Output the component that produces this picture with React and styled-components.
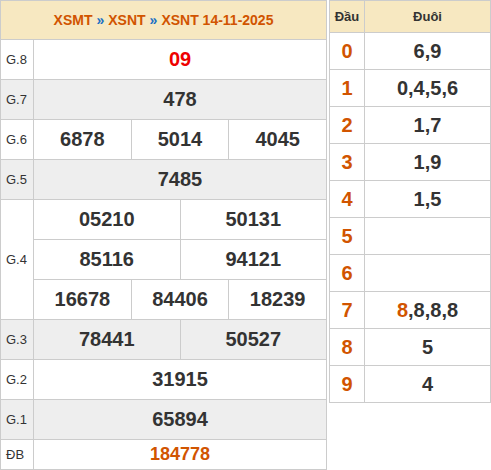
import React from "react"
import styled, { createGlobalStyle } from "styled-components"

const GlobalStyle = createGlobalStyle`
  body {
    margin: 0;
    background: #fff;
    font-family: "Liberation Sans", Arial, sans-serif;
  }
`

const Page = styled.div`
  display: flex;
  align-items: flex-start;
  gap: 2px;
  width: 491px;
`

const Results = styled.div`
  width: 327px;
  border-left: 1px solid #ccc;
  border-right: 1px solid #ccc;
  border-top: 1px solid #ccc;
  box-sizing: border-box;
`

const Title = styled.div`
  height: 38px;
  display: flex;
  align-items: center;
  justify-content: center;
  background: #f7e8c1;
  border-bottom: 1px solid #ccc;
  font-size: 14px;
  font-weight: bold;
  color: #d15400;
`

const Sep = styled.span`
  color: #1a6fc4;
  margin: 0 4px;
`

const Row = styled.div`
  display: grid;
  grid-template-columns: 33px 1fr;
  background: ${({ gray }) => (gray ? "#eeeeee" : "#fff")};
  border-bottom: 1px solid #ccc;
`

const Label = styled.div`
  display: flex;
  align-items: center;
  padding-left: 5px;
  border-right: 1px solid #ccc;
  font-size: 13px;
  color: #333;
`

const Lines = styled.div`
  display: flex;
  flex-direction: column;
`

const Line = styled.div`
  display: flex;
  height: ${({ h }) => h || 39}px;
  & + & {
    border-top: 1px solid #ccc;
  }
`

const Num = styled.div`
  flex: 1;
  display: flex;
  align-items: center;
  justify-content: center;
  font-size: ${({ small }) => (small ? 18 : 20)}px;
  font-weight: bold;
  color: ${({ color }) => color || "#333"};
  & + & {
    border-left: 1px solid #ccc;
  }
`

const Loto = styled.div`
  width: 162px;
  border: 1px solid #ccc;
  border-bottom: none;
  box-sizing: border-box;
`

const LotoRow = styled.div`
  display: grid;
  grid-template-columns: 35px 1fr;
  height: ${({ head }) => (head ? 31 : 36)}px;
  background: ${({ head }) => (head ? "#f7e8c1" : "#fff")};
  border-bottom: 1px solid #ccc;
`

const LotoCell = styled.div`
  display: flex;
  align-items: center;
  justify-content: center;
  font-weight: bold;
  font-size: ${({ head }) => (head ? 13 : 20)}px;
  color: ${({ orange }) => (orange ? "#d15400" : "#333")};
  &:first-child {
    border-right: 1px solid #ccc;
  }
`

const Hi = styled.span`
  color: #d15400;
`

const prizes = [
  { label: "G.8", lines: [["09"]], color: "#ee0000" },
  { label: "G.7", lines: [["478"]], gray: true },
  { label: "G.6", lines: [["6878", "5014", "4045"]] },
  { label: "G.5", lines: [["7485"]], gray: true },
  {
    label: "G.4",
    lines: [
      ["05210", "50131"],
      ["85116", "94121"],
      ["16678", "84406", "18239"],
    ],
  },
  { label: "G.3", lines: [["78441", "50527"]], gray: true },
  { label: "G.2", lines: [["31915"]] },
  { label: "G.1", lines: [["65894"]], gray: true },
  { label: "ĐB", lines: [["184778"]], color: "#d15400", small: true, h: 29 },
]

const loto = ["6,9", "0,4,5,6", "1,7", "1,9", "1,5", "", "", "8,8,8,8", "5", "4"]

export default function App() {
  return (
    <>
      <GlobalStyle />
      <Page>
        <Results>
          <Title>
            XSMT<Sep>»</Sep>XSNT<Sep>»</Sep>XSNT 14-11-2025
          </Title>
          {prizes.map(p => (
            <Row key={p.label} gray={p.gray}>
              <Label>{p.label}</Label>
              <Lines>
                {p.lines.map((line, i) => (
                  <Line key={i} h={p.h}>
                    {line.map(n => (
                      <Num key={n} color={p.color} small={p.small}>
                        {n}
                      </Num>
                    ))}
                  </Line>
                ))}
              </Lines>
            </Row>
          ))}
        </Results>
        <Loto>
          <LotoRow head>
            <LotoCell head>Đầu</LotoCell>
            <LotoCell head>Đuôi</LotoCell>
          </LotoRow>
          {loto.map((v, i) => (
            <LotoRow key={i}>
              <LotoCell orange>{i}</LotoCell>
              <LotoCell>
                {i === 7 ? (
                  <>
                    <Hi>8</Hi>,8,8,8
                  </>
                ) : (
                  v
                )}
              </LotoCell>
            </LotoRow>
          ))}
        </Loto>
      </Page>
    </>
  )
}
